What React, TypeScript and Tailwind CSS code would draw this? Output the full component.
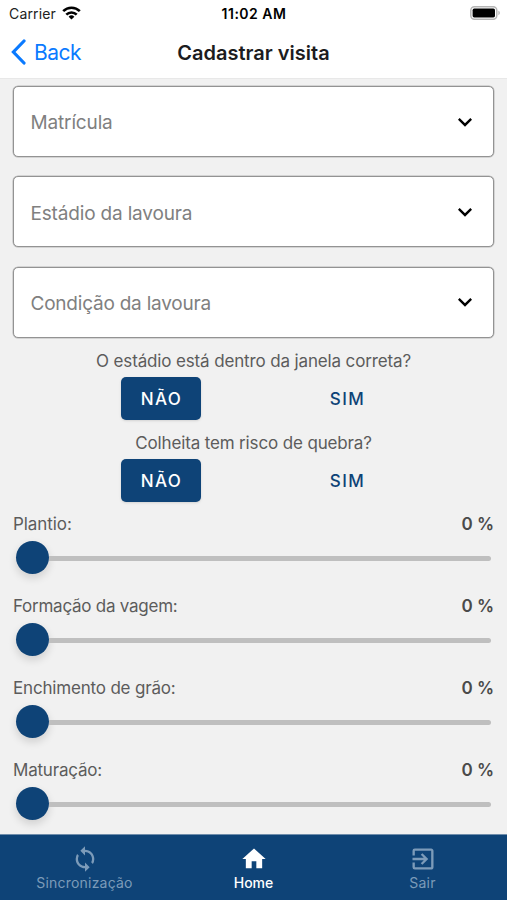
import { useState } from "react";
import { MdExitToApp, MdHome, MdKeyboardArrowDown, MdSync } from "react-icons/md";

const SELECTS = [
  { label: "Matrícula", tracking: "tracking-[-0.15px]" },
  { label: "Estádio da lavoura", tracking: "tracking-[-0.17px]" },
  { label: "Condição da lavoura", tracking: "tracking-[-0.22px]" },
];

const QUESTIONS = ["O estádio está dentro da janela correta?", "Colheita tem risco de quebra?"];

const STAGES = [
  { label: "Plantio:", tracking: "tracking-[-0.08px]" },
  { label: "Formação da vagem:", tracking: "tracking-[-0.25px]" },
  { label: "Enchimento de grão:", tracking: "tracking-[-0.18px]" },
  { label: "Maturação:", tracking: "tracking-[-0.2px]" },
];

const TABS = [
  { label: "Sincronização", icon: MdSync, active: false },
  { label: "Home", icon: MdHome, active: true },
  { label: "Sair", icon: MdExitToApp, active: false },
];

const StatusBar = () => (
  <div className="grid h-[27px] grid-cols-3 items-center pl-[9px] pr-[6px] text-[14px] text-[#222]">
    <div className="flex items-center gap-[6px]">
      <span className="tracking-[0.15px]">Carrier</span>
      <svg className="-mt-[2px] h-[14px] w-[19px]" viewBox="0 0 19 14" fill="none" stroke="#000" strokeWidth="2.6">
        <path d="M1.2 5.2a11.8 11.8 0 0 1 16.6 0" />
        <path d="M4.3 8.6a7.4 7.4 0 0 1 10.4 0" />
        <path d="M9.5 13.6L6.6 10.7a4.2 4.2 0 0 1 5.8 0z" fill="#000" stroke="none" />
      </svg>
    </div>
    <span className="-ml-[2px] text-center font-semibold tracking-[0.5px] text-black">11:02 AM</span>
    <svg className="-mt-px h-[14px] w-[31px] justify-self-end" viewBox="0 0 31 14">
      <rect x="0.8" y="0.8" width="26" height="12.4" rx="3.6" fill="#fff" stroke="#b5b5b5" strokeWidth="1.5" />
      <rect x="2.6" y="2.6" width="22.4" height="8.8" rx="1.6" fill="#000" />
      <path d="M28.4 4.8c1.9.5 1.9 3.9 0 4.4z" fill="#b5b5b5" />
    </svg>
  </div>
);

const Header = () => (
  <header className="grid h-[52px] grid-cols-[1fr_auto_1fr] items-center border-b border-[#e8e8e8] px-[11px]">
    <button type="button" className="flex items-center gap-[8px] text-[21px] tracking-[-0.5px] text-[#0a7aff]">
      <svg className="-mt-px h-[26px] w-[15px]" viewBox="0 0 15 26" fill="none" stroke="currentColor" strokeWidth="3.2" strokeLinecap="round">
        <path d="M13 2L2.4 13L13 24" />
      </svg>
      Back
    </button>
    <h1 className="text-[20px] font-semibold text-[#1c1c1e]">Cadastrar visita</h1>
  </header>
);

const SelectField = ({ label, tracking }: { label: string; tracking: string }) => (
  <button
    type="button"
    className="flex h-[71px] w-full items-center justify-between rounded-[5px] border border-[#939393] bg-white pl-[16.5px] pr-[14px] text-[19px] text-[#808080] shadow-[0_0_0_0.5px_#b8b8b8]"
  >
    <span className={`pt-[4px] ${tracking}`}>{label}</span>
    <MdKeyboardArrowDown className="size-7 text-black" />
  </button>
);

const YesNo = ({ label }: { label: string }) => {
  const [answer, setAnswer] = useState("NÃO");
  return (
    <div className="h-[82px]">
      <p className="pt-px text-center text-[17px] leading-[27px] tracking-[-0.14px] text-[#5c5c5c]">{label}</p>
      <div className="mt-[2px] grid grid-cols-2 px-[54.5px]">
        {["NÃO", "SIM"].map((option) => (
          <button
            key={option}
            type="button"
            onClick={() => setAnswer(option)}
            className={`mx-auto h-[43px] w-20 rounded-[5px] pt-[2px] pl-[2px] text-[17px] font-medium tracking-[1.4px] ${
              answer === option ? "bg-[#0e4377] text-white shadow-sm" : "text-[#0e4377]"
            }`}
          >
            {option}
          </button>
        ))}
      </div>
    </div>
  );
};

const StageSlider = ({ label, tracking }: { label: string; tracking: string }) => (
  <div className="h-[82px]">
    <div className="flex justify-between text-[17px] leading-[27px] text-[#5c5c5c]">
      <span className={tracking}>{label}</span>
      <span className="font-semibold text-[#4a4a4a]">0 %</span>
    </div>
    <div className="mt-[3px] flex h-[33px] items-center pl-[2.5px] pr-[3px]">
      <div className="size-[33px] shrink-0 rounded-full bg-[#0e4377] shadow-[0_4px_8px_rgba(0,0,0,0.14)]" />
      <div className="mt-[3px] h-[5px] flex-1 rounded-r-full bg-[#bfbfbf]" />
    </div>
  </div>
);

const TabBar = () => (
  <nav className="grid h-[66px] shrink-0 grid-cols-3 border-t border-[#6f8dab] bg-[#0e4377]">
    {TABS.map(({ label, icon: Icon, active }) => (
      <button
        key={label}
        type="button"
        className={`flex flex-col items-center pt-[10px] text-[14px] leading-[19px] ${
          active ? "font-medium text-white" : "tracking-[0.2px] text-[#7c9bb9]"
        }`}
      >
        <Icon className="size-7" />
        {label}
      </button>
    ))}
  </nav>
);

export default function App() {
  return (
    <div className="flex h-[900px] w-[507px] flex-col overflow-hidden bg-[#f1f1f1] font-['Inter',sans-serif]">
      <div className="bg-white">
        <StatusBar />
        <Header />
      </div>
      <main className="min-h-0 flex-1 overflow-hidden px-[13px] pt-[7px]">
        <div className="flex flex-col gap-[19.4px]">
          {SELECTS.map((field) => (
            <SelectField key={field.label} {...field} />
          ))}
        </div>
        <div className="mt-[9px]">
          {QUESTIONS.map((label) => (
            <YesNo key={label} label={label} />
          ))}
          {STAGES.map((stage) => (
            <StageSlider key={stage.label} {...stage} />
          ))}
        </div>
      </main>
      <TabBar />
    </div>
  );
}
